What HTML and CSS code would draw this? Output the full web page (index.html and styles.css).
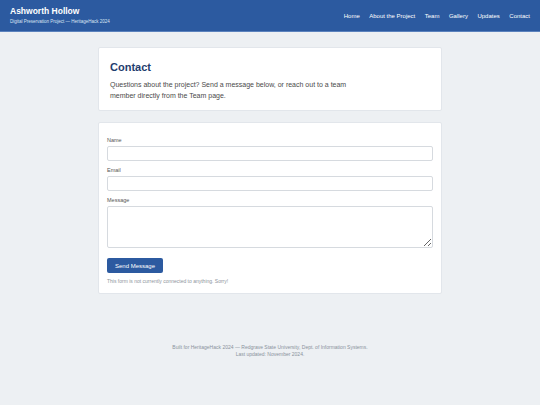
FILE: index.html
```html
<!DOCTYPE html>
<html lang="en">
<head>
    <meta charset="UTF-8">
    <meta name="viewport" content="width=device-width, initial-scale=1.0">
    <title>Contact — Ashworth Hollow</title>
    <link rel="stylesheet" href="styles.css">
</head>
<body>
    <header class="site-header">
        <div class="brand">
            <div class="brand-title">Ashworth Hollow</div>
            <div class="brand-sub">Digital Preservation Project — HeritageHack 2024</div>
        </div>
        <nav class="nav">
            <a href="#">Home</a>
            <a href="#">About the Project</a>
            <a href="#">Team</a>
            <a href="#">Gallery</a>
            <a href="#">Updates</a>
            <a href="#">Contact</a>
        </nav>
    </header>

    <main class="container">
        <section class="card intro">
            <h1>Contact</h1>
            <p>Questions about the project? Send a message below, or reach out to a team member directly from the Team page.</p>
        </section>

        <section class="card form-card">
            <form onsubmit="return false">
                <div class="field">
                    <label for="name">Name</label>
                    <input type="text" id="name">
                </div>
                <div class="field">
                    <label for="email">Email</label>
                    <input type="email" id="email">
                </div>
                <div class="field">
                    <label for="message">Message</label>
                    <textarea id="message"></textarea>
                </div>
                <button class="send-btn" type="submit">Send Message</button>
                <p class="note">This form is not currently connected to anything. Sorry!</p>
            </form>
        </section>
    </main>

    <footer class="site-footer">
        <p>Built for HeritageHack 2024 — Redgrave State University, Dept. of Information Systems.</p>
        <p>Last updated: November 2024.</p>
    </footer>
</body>
</html>
```

FILE: styles.css
```css
body {
    margin: 0;
    font-family: "Liberation Sans", Arial, sans-serif;
    background: #edf0f3;
    color: #333;
}
.site-header {
    display: flex;
    justify-content: space-between;
    align-items: center;
    height: 31px;
    padding: 0 10px;
    background: #2c5aa0;
    border-bottom: 1px solid #5b82bd;
    color: white;
}
.brand-title {
    font-size: 8.5px;
    font-weight: bold;
    line-height: 10px;
}
.brand-sub {
    font-size: 4.5px;
    line-height: 6px;
    margin-top: 3px;
    color: #dbe5f3;
}
.nav {
    display: flex;
    gap: 9.5px;
}
.nav a {
    color: white;
    text-decoration: none;
    font-size: 6px;
}
.container {
    width: 344px;
    margin: 15px auto 0;
}
.card {
    background: white;
    border: 1px solid #e2e6eb;
    border-radius: 2px;
    box-sizing: border-box;
}
.intro {
    padding: 12px 11px 9px;
    margin-bottom: 11px;
}
.intro h1 {
    margin: 0;
    font-size: 11px;
    line-height: 14px;
    color: #1f3d6e;
}
.intro p {
    margin: 6px 0 0;
    max-width: 240px;
    font-size: 7px;
    line-height: 10.5px;
    color: #4a4a4a;
}
.form-card {
    padding: 13px 8px 8px;
}
.field {
    margin-bottom: 5px;
}
.field label {
    display: block;
    font-size: 5.5px;
    line-height: 8px;
    margin-bottom: 2px;
    color: #555;
}
.field input,
.field textarea {
    display: block;
    width: 100%;
    box-sizing: border-box;
    height: 15px;
    margin: 0;
    padding: 2px 4px;
    border: 1px solid #d6dadf;
    border-radius: 2px;
    font-family: inherit;
    font-size: 6px;
}
.field textarea {
    height: 42px;
    resize: vertical;
}
.send-btn {
    margin-top: 5px;
    height: 15px;
    padding: 0 8px;
    background: #2c5aa0;
    color: white;
    border: none;
    border-radius: 2px;
    font-family: inherit;
    font-size: 6px;
    cursor: pointer;
}
.note {
    margin: 5px 0 0;
    font-size: 5px;
    line-height: 7px;
    color: #8e949b;
}
.site-footer {
    margin-top: 50px;
    text-align: center;
    font-size: 5px;
    line-height: 7px;
    color: #8a929c;
}
.site-footer p {
    margin: 0;
}
```
